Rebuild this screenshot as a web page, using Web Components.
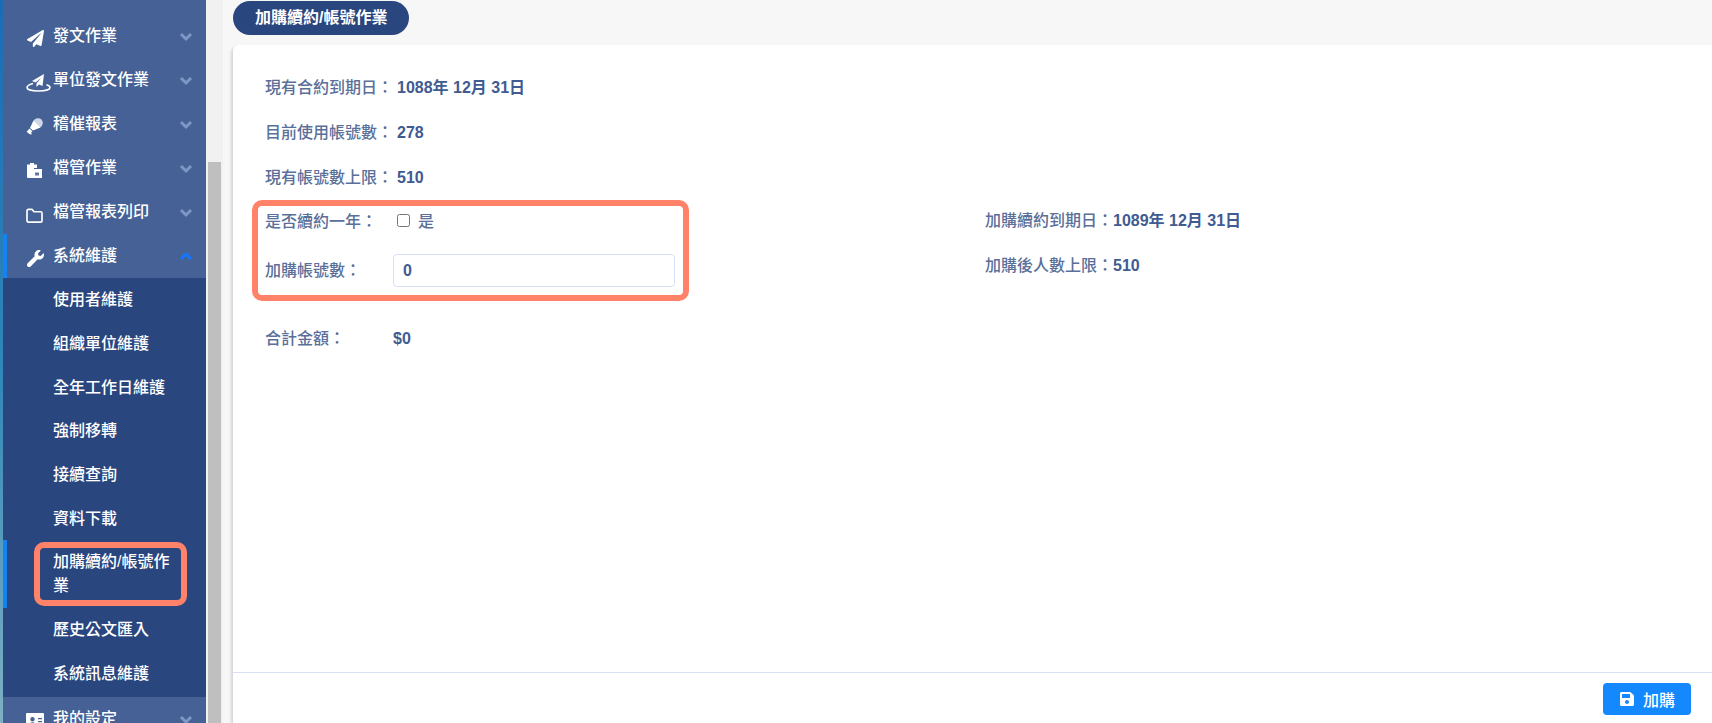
<!DOCTYPE html>
<html lang="zh-Hant">
<head>
<meta charset="utf-8">
<title>加購續約/帳號作業</title>
<style>
  html, body {
    margin: 0;
    height: 100%;
    overflow: hidden;
    background: #f7f7f7;
    font-family: "Liberation Sans", "Noto Sans CJK TC", sans-serif;
    font-size: 16px;
  }
</style>
</head>
<body>
<app-shell>
  <side-nav slot="nav">
    <nav-item icon="plane">發文作業</nav-item>
    <nav-item icon="orbit">單位發文作業</nav-item>
    <nav-item icon="mic">稽催報表</nav-item>
    <nav-item icon="clip">檔管作業</nav-item>
    <nav-item icon="folder">檔管報表列印</nav-item>
    <nav-item icon="wrench" open>系統維護</nav-item>
    <sub-nav>
      <sub-item>使用者維護</sub-item>
      <sub-item>組織單位維護</sub-item>
      <sub-item>全年工作日維護</sub-item>
      <sub-item>強制移轉</sub-item>
      <sub-item>接續查詢</sub-item>
      <sub-item>資料下載</sub-item>
      <sub-item active>加購續約/帳號作業</sub-item>
      <sub-item>歷史公文匯入</sub-item>
      <sub-item>系統訊息維護</sub-item>
    </sub-nav>
    <nav-item icon="card">我的設定</nav-item>
  </side-nav>
  <page-title slot="title">加購續約/帳號作業</page-title>
  <purchase-card slot="card"></purchase-card>
</app-shell>

<script>
const ICONS = {
  plane: '<svg viewBox="0 0 512 512" width="17" height="17" style="transform:translate(1px,2px)"><path fill="#fff" d="M476 3.2L12.5 270.6c-18.1 10.4-15.8 35.6 2.2 43.2L121 358.4l287.3-253.2c5.5-4.9 13.3 2.6 8.6 8.3L176 407v80.5c0 23.6 28.5 32.9 42.5 15.8L282 426l124.6 52.2c14.2 6 30.4-2.9 33-18.2l72-432C515 7.8 493.3-6.8 476 3.2z"/></svg>',
  orbit: '<svg viewBox="0 0 26 18" width="26" height="18" style="flex:none;transform:translate(0,3px)"><path fill="#fff" d="M18 0L6 7l3.500 1.500L15 4l-4.500 5.500V13l2.500-2.500 3.500 1.500z"/><path fill="none" stroke="#fff" stroke-width="1.600" d="M7 9.500C3.500 10.500 1 12 1 13.500 1 15.500 6 17 12.500 17S24 15.500 24 13.500c0-1-1.200-2-3.500-2.800"/></svg>',
  mic: '<svg viewBox="0 0 17 17" width="17" height="17" style="transform:translate(0,2px)"><circle cx="12" cy="5" r="4.800" fill="#cfd6e4"/><path fill="#fff" d="M7.500 2.500l7 7-7.500 3-3-2.500zM3.500 10.500l3 3-1.200 .6 .4 2.400-2.700-.5-.5-1L.5 14z"/></svg>',
  clip: '<svg viewBox="0 0 15 16" width="15" height="16" style="transform:translate(1px,2px)"><path fill="#fff" d="M0 2.500h3V1h4v1.500h3V6H0zM0 6h7v10H1a1 1 0 0 1-1-1z"/><path fill="#fff" d="M6 7h9v9H6z"/><path fill="#5f78a6" d="M8 10.500h4v3H8z"/></svg>',
  folder: '<svg viewBox="0 0 18 16" width="17" height="15" style="transform:translate(0,3px)"><path fill="none" stroke="#fff" stroke-width="1.800" stroke-linejoin="round" d="M1 3a1.500 1.500 0 0 1 1.500-1.500h4L8.500 4h7A1.500 1.500 0 0 1 17 5.500v8a1.500 1.500 0 0 1-1.500 1.500h-13A1.500 1.500 0 0 1 1 13.500z"/></svg>',
  wrench: '<svg viewBox="0 0 512 512" width="17" height="17" style="transform:translate(1px,2px)"><path fill="#fff" d="M507.730 109.100c-2.240-9.030-13.540-12.090-20.120-5.510l-74.360 74.360-67.880-11.310-11.310-67.880 74.360-74.360c6.620-6.620 3.430-17.900-5.660-20.160-47.380-11.740-99.550.91-136.580 37.930-39.640 39.640-50.550 97.100-34.050 147.200L18.740 402.760c-24.990 24.990-24.990 65.510 0 90.500 24.990 24.990 65.510 24.990 90.500 0l213.210-213.210c50.120 16.710 107.470 5.680 147.370-34.220 37.070-37.070 49.700-89.320 37.910-136.730z"/></svg>',
  card: '<svg viewBox="0 0 18 16" width="18" height="16" style="transform:translate(0,2px)"><path fill="#fff" fill-rule="evenodd" d="M1 0h16a1 1 0 0 1 1 1v14a1 1 0 0 1-1 1H1a1 1 0 0 1-1-1V1a1 1 0 0 1 1-1zm5.500 4a2.200 2.200 0 1 0 0 4.400 2.200 2.200 0 0 0 0-4.400zM3 12.500h7c0-2-1.500-3.200-3.500-3.200S3 10.500 3 12.500zM12 5h4v1.300h-4zm0 3h4v1.300h-4z"/></svg>'
};

class AppShell extends HTMLElement {
  constructor() {
    super();
    this.attachShadow({ mode: 'open' });
    this.shadowRoot.innerHTML = `
      <style>
        :host { display: flex; height: 723px; overflow: hidden; }
        #edge {
          flex: none;
          width: 3px;
          background: linear-gradient(#1a6db5, #2f86b8 50%, #7fb0c4);
        }
        #nav { flex: none; width: 203px; background: #456195; overflow: hidden; }
        #bar {
          flex: none;
          width: 17px;
          box-sizing: border-box;
          padding: 162px 2px 0;
          background: #f1f1f1;
        }
        #thumb { height: 100%; background: #bfbfbf; }
        #main {
          flex: 1;
          min-width: 0;
          display: flex;
          flex-direction: column;
          gap: 10px;
          padding: 1px 0 0 10px;
        }
      </style>
      <div id="edge"></div>
      <div id="nav"><slot name="nav"></slot></div>
      <div id="bar"><div id="thumb"></div></div>
      <div id="main">
        <slot name="title"></slot>
        <slot name="card"></slot>
      </div>
    `;
  }
}

class SideNav extends HTMLElement {
  constructor() {
    super();
    this.attachShadow({ mode: 'open' });
    this.shadowRoot.innerHTML = `
      <style>
        :host { display: block; padding-top: 14px; }
      </style>
      <slot></slot>
    `;
  }
}

class NavItem extends HTMLElement {
  constructor() {
    super();
    this.attachShadow({ mode: 'open' });
    const open = this.hasAttribute('open');
    const chevron = open ? '3,9 8,4 13,9' : '3,4 8,9 13,4';
    this.shadowRoot.innerHTML = `
      <style>
        :host {
          display: flex;
          align-items: center;
          height: 44px;
          box-sizing: border-box;
          color: #fff;
          font-weight: 500;
          position: relative;
        }
        #icon { width: 26px; margin-left: 23px; margin-right: 1px; display: flex; height: 24px; align-items: center; }
        #label { flex: 1; line-height: 24px; margin-top: -1px; }
        svg.chev { margin-right: 12px; }
        :host([open]) { box-shadow: inset 4px 0 0 #1482f0; }
      </style>
      <span id="icon">${ICONS[this.getAttribute('icon')] || ''}</span>
      <span id="label"><slot></slot></span>
      <svg class="chev" width="16" height="13" viewBox="0 0 16 13">
        <polyline points="${chevron}" fill="none" stroke="${open ? '#1478ff' : '#7f97c4'}" stroke-width="3"/>
      </svg>
    `;
  }
}

class SubNav extends HTMLElement {
  constructor() {
    super();
    this.attachShadow({ mode: 'open' });
    this.shadowRoot.innerHTML = `
      <style>
        :host { display: block; background: #2a467f; padding-bottom: 2px; }
      </style>
      <slot></slot>
    `;
  }
}

class SubItem extends HTMLElement {
  constructor() {
    super();
    this.attachShadow({ mode: 'open' });
    this.shadowRoot.innerHTML = `
      <style>
        :host {
          display: block;
          box-sizing: border-box;
          padding: 10.35px 30px 9.35px 50px;
          line-height: 24px;
          color: #fff;
          font-weight: 500;
          position: relative;
        }
        :host([active]) { box-shadow: inset 4px 0 0 #1482f0; }
        #mark {
          display: none;
          position: absolute;
          left: 31px;
          right: 19px;
          top: 2px;
          bottom: 2px;
          border: 6px solid #ff8269;
          border-radius: 10px;
        }
        :host([active]) #mark { display: block; }
      </style>
      <slot></slot>
      <div id="mark"></div>
    `;
  }
}

class PageTitle extends HTMLElement {
  constructor() {
    super();
    this.attachShadow({ mode: 'open' });
    this.shadowRoot.innerHTML = `
      <style>
        :host {
          display: block;
          width: fit-content;
          height: 34px;
          line-height: 33px;
          padding: 0 22px;
          border-radius: 17px;
          background: #2a467f;
          color: #fff;
          font-weight: 700;
        }
      </style>
      <slot></slot>
    `;
  }
}

class InfoRow extends HTMLElement {
  constructor() {
    super();
    this.attachShadow({ mode: 'open' });
    this.shadowRoot.innerHTML = `
      <style>
        :host {
          display: flex;
          align-items: baseline;
          height: 45px;
          line-height: 47px;
          color: #5a6f99;
          font-weight: 500;
        }
        #label { width: 132px; flex: none; }
        #value { color: #3f5b91; font-weight: 700; }
      </style>
      <span id="label"><slot name="label"></slot></span>
      <span id="value"><slot></slot></span>
    `;
  }
}

class PurchaseCard extends HTMLElement {
  constructor() {
    super();
    this.attachShadow({ mode: 'open' });
    this.shadowRoot.innerHTML = `
      <style>
        :host {
          display: flex;
          flex-direction: column;
          height: 678px;
          position: relative;
          background: #fff;
          border-top-left-radius: 6px;
          box-shadow: -2px 2px 3px rgba(0, 0, 0, .14);
          color: #5a6f99;
          font-weight: 500;
        }
        #body { flex: 1; padding: 19px 32px 0; }
        #extend {
          display: grid;
          grid-template-columns: 720px 1fr;
        }
        .line { display: flex; align-items: center; color: #5a6f99; }
        .line.one { height: 41px; }
        .line.two { height: 61px; }
        .line.two .key { margin-top: -3px; }
        .key { width: 128px; flex: none; }
        .side b, #total b { color: #3f5b91; font-weight: 700; }
        .side { display: flex; align-items: baseline; height: 41px; line-height: 43px; }
        .side.low { margin-top: 4px; }
        input[type=checkbox] { width: 13px; height: 13px; margin: 1px 8px 0 4px; }
        input[type=text] {
          width: 282px;
          height: 33px;
          box-sizing: border-box;
          padding: 0 9px;
          border: 1px solid #d5e1f2;
          border-radius: 4px;
          font: 700 16px "Liberation Sans", "Noto Sans CJK TC", sans-serif;
          color: #3f5b91;
          outline: none;
        }
        #total { display: flex; align-items: baseline; height: 45px; line-height: 47px; margin-top: 14px; }
        #mark {
          position: absolute;
          left: 19px;
          top: 155px;
          width: 437px;
          height: 101px;
          box-sizing: border-box;
          border: 6px solid #ff8269;
          border-radius: 10px;
          pointer-events: none;
        }
        #foot {
          flex: none;
          height: 51px;
          box-sizing: border-box;
          border-top: 1px solid #d5e1f2;
          padding: 10px 21px 0 0;
          display: flex;
          justify-content: flex-end;
          align-items: flex-start;
        }
        button {
          width: 88px;
          height: 32px;
          border: 0;
          border-radius: 4px;
          background: #1489ff;
          color: #fff;
          font: 500 16px "Liberation Sans", "Noto Sans CJK TC", sans-serif;
          display: flex;
          align-items: center;
          justify-content: center;
          gap: 8px;
          padding: 0;
        }
      </style>
      <div id="body">
        <info-row><span slot="label">現有合約到期日：</span>1088年 12月 31日</info-row>
        <info-row><span slot="label">目前使用帳號數：</span>278</info-row>
        <info-row><span slot="label">現有帳號數上限：</span>510</info-row>
        <div id="extend">
          <div>
            <div class="line one"><span class="key">是否續約一年：</span><input type="checkbox"><span>是</span></div>
            <div class="line two"><span class="key">加購帳號數：</span><input type="text" value="0"></div>
          </div>
          <div>
            <div class="side">加購續約到期日：<b>1089年 12月 31日</b></div>
            <div class="side low">加購後人數上限：<b>510</b></div>
          </div>
        </div>
        <div id="total"><span class="key">合計金額：</span><b>$0</b></div>
      </div>
      <div id="foot">
        <button>
          <svg width="16" height="16" viewBox="0 0 448 512" style="margin-top:-1px"><path fill="#fff" d="M433.900 129.900l-83.900-83.900A48 48 0 0 0 316.100 32H48C21.500 32 0 53.500 0 80v352c0 26.500 21.500 48 48 48h352c26.500 0 48-21.500 48-48V163.900a48 48 0 0 0-14.100-34zM224 416c-35.300 0-64-28.700-64-64s28.700-64 64-64 64 28.700 64 64-28.700 64-64 64zm96-304.500V212c0 6.600-5.400 12-12 12H76c-6.600 0-12-5.400-12-12V108c0-6.600 5.400-12 12-12h228.500c3.200 0 6.200 1.300 8.500 3.500l3.500 3.500c2.200 2.200 3.500 5.300 3.500 8.500z"/></svg>
          <span>加購</span>
        </button>
      </div>
      <div id="mark"></div>
    `;
  }
}

customElements.define('app-shell', AppShell);
customElements.define('side-nav', SideNav);
customElements.define('nav-item', NavItem);
customElements.define('sub-nav', SubNav);
customElements.define('sub-item', SubItem);
customElements.define('page-title', PageTitle);
customElements.define('info-row', InfoRow);
customElements.define('purchase-card', PurchaseCard);
</script>
</body>
</html>
